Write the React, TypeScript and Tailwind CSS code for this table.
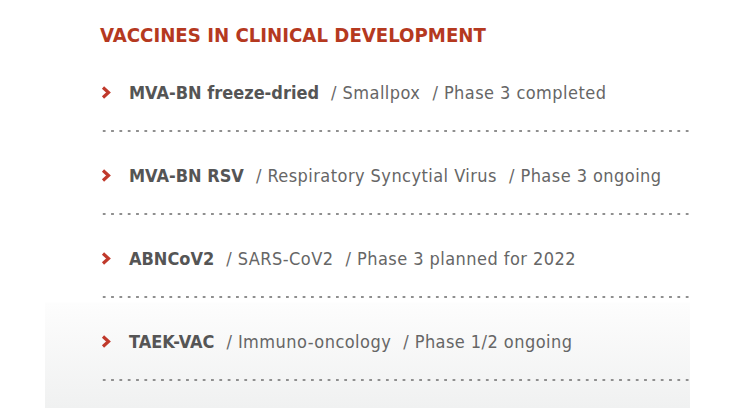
const vaccines = [
  { name: 'MVA-BN freeze-dried', target: 'Smallpox', phase: 'Phase 3 completed' },
  { name: 'MVA-BN RSV', target: 'Respiratory Syncytial Virus', phase: 'Phase 3 ongoing' },
  { name: 'ABNCoV2', target: 'SARS-CoV2', phase: 'Phase 3 planned for 2022' },
  { name: 'TAEK-VAC', target: 'Immuno-oncology', phase: 'Phase 1/2 ongoing' },
];

function Chevron() {
  return (
    <svg width="10" height="13" viewBox="0 0 10 13" className="block">
      <polyline points="2,1.5 7.5,6.5 2,11.5" fill="none" stroke="#c0392b" strokeWidth="3.2" />
    </svg>
  );
}

function Dots() {
  return (
    <div className="h-[2px] w-full bg-[radial-gradient(circle,#8f8f8f_1.2px,transparent_1.5px)] bg-[length:8.33px_2px] bg-repeat-x" />
  );
}

export default function App() {
  return (
    <div className="h-[416px] w-[740px] bg-white font-['DejaVu_Sans_Condensed','DejaVu_Sans',sans-serif]">
      <div className="ml-[45px] h-[408px] w-[645px] bg-[linear-gradient(to_bottom,#ffffff_0px,#ffffff_302px,#fdfdfd_303px,#f0f1f1_408px)]">
        <div className="pl-[55px]">
          <h2 className="pt-[22px] text-[20.2px] font-bold leading-[26px] text-[#b5391f]">
            VACCINES IN CLINICAL DEVELOPMENT
          </h2>
          <ul className="mt-[24px]">
            {vaccines.map((v) => (
              <li key={v.name} className="pb-[23px]">
                <div className="flex h-[40px] items-center text-[18px] tracking-[0.45px] text-[#666]">
                  <span className="ml-[1px] mr-[18px]"><Chevron /></span>
                  <span className="font-bold tracking-normal text-[#555]">{v.name}</span>
                  <span className="ml-[12px]">/ {v.target}</span>
                  <span className="ml-[12px]">/ {v.phase}</span>
                </div>
                <div className="mt-[18px]">
                  <Dots />
                </div>
              </li>
            ))}
          </ul>
        </div>
      </div>
    </div>
  );
}
